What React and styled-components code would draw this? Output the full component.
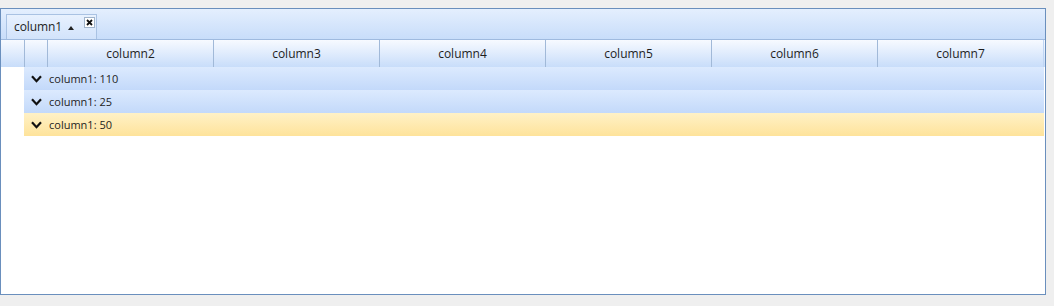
import React from "react";
import styled, { createGlobalStyle } from "styled-components";

const Global = createGlobalStyle`
  html, body { margin: 0; padding: 0; background: #efefef; }
  body { padding-top: 8px; font-family: "Open Sans", "Noto Sans", sans-serif; }
`;

const Grid = styled.div`
  width: 1044px;
  height: 285px;
  border: 1px solid #6a8fbd;
  background: #fff;
  display: flex;
  flex-direction: column;
  overflow: hidden;
`;

const GroupPanel = styled.div`
  height: 30px;
  box-sizing: border-box;
  background: linear-gradient(#e4effe, #c8ddfa);
  display: flex;
  align-items: flex-end;
  padding-left: 5px;
`;

const GroupTab = styled.div`
  height: 25px;
  box-sizing: border-box;
  border: 1px solid #a9c2e3;
  border-bottom: none;
  background: linear-gradient(#e8f1fe, #d2e3fb);
  display: flex;
  align-items: flex-start;
  padding-left: 7px;
  padding-right: 1px;
  font-size: 12px;
  color: #1e1e1e;
`;

const TabText = styled.span`
  line-height: 24px;
  letter-spacing: -0.1px;
`;

const SortArrow = styled.span`
  width: 0;
  height: 0;
  border-left: 3.5px solid transparent;
  border-right: 3.5px solid transparent;
  border-bottom: 4px solid #222;
  margin: 11px 10px 0 6px;
`;

const CloseBox = styled.span`
  width: 11px;
  height: 11px;
  box-sizing: border-box;
  border: 1px solid #a0b4cc;
  background: #fff;
  margin-top: 2px;
  display: flex;
  align-items: center;
  justify-content: center;
`;

const HeaderRow = styled.div`
  display: flex;
  height: 28px;
  box-sizing: border-box;
  background: linear-gradient(#f7faff, #c8ddfa);
  border-top: 1px solid #9fbadf;
`;

const HeaderCell = styled.div`
  width: ${(p) => p.$w}px;
  flex: none;
  box-sizing: border-box;
  border-right: 1px solid ${(p) => (p.$last ? "#c0d6f4" : "#a1b9d8")};
  display: flex;
  align-items: center;
  justify-content: center;
  font-size: 12px;
  color: #1e1e1e;
`;

const GroupRow = styled.div`
  height: 23px;
  margin-left: 23px;
  width: 1020px;
  display: flex;
  align-items: center;
  background: ${(p) =>
    p.$selected
      ? "linear-gradient(#fff1c6, #fee39b)"
      : "linear-gradient(#dceafe, #c3d9fa)"};
  font-size: 11px;
  color: #1e1e1e;
`;

const Chevron = styled.svg`
  width: 11px;
  height: 8px;
  margin-left: 7px;
  margin-right: 7px;
  flex: none;
`;

const headers = ["column2", "column3", "column4", "column5", "column6", "column7"];
const groups = [
  { v: "110" },
  { v: "25" },
  { v: "50", selected: true },
];

export default function App() {
  return (
    <>
      <Global />
      <Grid>
        <GroupPanel>
          <GroupTab>
            <TabText>column1</TabText>
            <SortArrow />
            <CloseBox>
              <svg width="7" height="7" viewBox="0 0 7 7">
                <path d="M1 1L6 6M6 1L1 6" stroke="#111" strokeWidth="1.8" />
              </svg>
            </CloseBox>
          </GroupTab>
        </GroupPanel>
        <HeaderRow>
          <HeaderCell $w={24} />
          <HeaderCell $w={23} />
          {headers.map((h, i) => (
            <HeaderCell key={h} $w={166} $last={i === headers.length - 1}>
              {h}
            </HeaderCell>
          ))}
        </HeaderRow>
        {groups.map((g, i) => (
          <GroupRow key={i} $selected={g.selected}>
            <Chevron viewBox="0 0 11 8">
              <path d="M1 1.2L5.5 6.2L10 1.2" fill="none" stroke="#111" strokeWidth="2.2" />
            </Chevron>
            column1: {g.v}
          </GroupRow>
        ))}
      </Grid>
    </>
  );
}
